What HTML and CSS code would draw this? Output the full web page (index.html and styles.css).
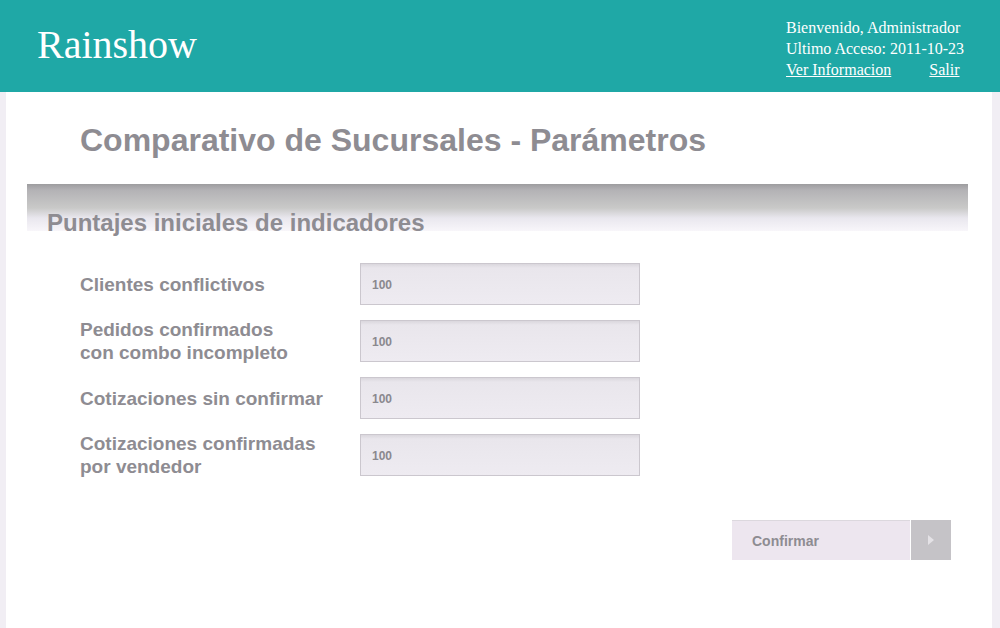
FILE: index.html
```html
<!DOCTYPE html>
<html lang="es">
<head>
<meta charset="utf-8">
<title>Rainshow - Comparativo de Sucursales</title>
<link rel="stylesheet" href="styles.css">
</head>
<body>
<header class="topbar">
  <div class="brand">Rainshow</div>
  <div class="userbox">
    <div>Bienvenido, Administrador</div>
    <div>Ultimo Acceso: 2011-10-23</div>
    <div class="links"><a href="#">Ver Informacion</a><a href="#">Salir</a></div>
  </div>
</header>
<main class="content">
  <h1 class="title">Comparativo de Sucursales - Parámetros</h1>
  <section class="section">
    <div class="section-bar"><h2>Puntajes iniciales de indicadores</h2></div>
    <form class="form">
      <label class="label" for="f1">Clientes conflictivos</label>
      <input class="field" id="f1" type="text" value="100">
      <label class="label" for="f2">Pedidos confirmados<br>con combo incompleto</label>
      <input class="field" id="f2" type="text" value="100">
      <label class="label" for="f3">Cotizaciones sin confirmar</label>
      <input class="field" id="f3" type="text" value="100">
      <label class="label" for="f4">Cotizaciones confirmadas<br>por vendedor</label>
      <input class="field" id="f4" type="text" value="100">
    </form>
    <div class="actions">
      <button class="btn" type="button"><span class="btn-text">Confirmar</span><span class="btn-arrow"><svg width="8" height="12" viewBox="0 0 8 12"><path d="M1 1 L7 6 L1 11 Z" fill="#e4e2e6"/></svg></span></button>
    </div>
  </section>
</main>
</body>
</html>
```
FILE: styles.css
```css
html, body {
  margin: 0;
  padding: 0;
  background: #ffffff;
}
body {
  width: 1000px;
  height: 628px;
  overflow: hidden;
  font-family: "Liberation Sans", Arial, sans-serif;
}
.topbar {
  height: 92px;
  background: #1fa8a6;
  display: flex;
  justify-content: space-between;
  color: #ffffff;
  font-family: "Liberation Serif", "Times New Roman", serif;
}
.brand {
  font-size: 40px;
  line-height: 46px;
  padding: 22px 0 0 37px;
}
.userbox {
  width: 214px;
  padding-top: 17px;
  font-size: 16px;
  line-height: 21px;
}
.links {
  display: flex;
  gap: 38px;
}
.links a {
  color: #ffffff;
  text-decoration: underline;
}
.content {
  height: 536px;
  border-left: 6px solid #f1eef4;
  border-right: 8px solid #f1eef4;
  background: #ffffff;
}
.title {
  margin: 0;
  padding: 30px 0 0 74px;
  height: 62px;
  font-size: 32px;
  line-height: 36px;
  font-weight: bold;
  color: #8e8c92;
}
.section-bar {
  margin: 0 24px 0 21px;
  height: 47px;
  background: linear-gradient(to bottom, #9d9d9f 0px, #b3b2b5 6px, #c9c9c8 24px, #e9e7ee 34px, #f8f6fa 47px);
}
.section-bar h2 {
  margin: 0;
  padding: 27px 0 0 20px;
  font-size: 24px;
  line-height: 24px;
  font-weight: bold;
  color: #8e8c92;
}
.form {
  display: grid;
  grid-template-columns: 280px 280px;
  grid-auto-rows: 42px;
  row-gap: 15px;
  align-items: center;
  padding: 32px 0 0 74px;
}
.label {
  font-size: 19px;
  line-height: 23px;
  font-weight: bold;
  color: #8e8c92;
}
.field {
  box-sizing: border-box;
  width: 280px;
  height: 42px;
  margin: 0;
  padding: 2px 11px 0;
  border: 1px solid #cbc7ce;
  background: linear-gradient(to bottom, #dad7dd 0px, #e9e6ec 4px, #eeebf1 100%);
  font-family: "Liberation Sans", Arial, sans-serif;
  font-size: 12px;
  font-weight: bold;
  color: #8a888e;
  outline: none;
}
.actions {
  display: flex;
  justify-content: flex-end;
  padding: 44px 41px 0 0;
}
.btn {
  display: flex;
  height: 40px;
  margin: 0;
  padding: 0;
  border: 0;
  background: none;
  font-family: "Liberation Sans", Arial, sans-serif;
  cursor: pointer;
}
.btn-text {
  width: 178px;
  box-sizing: border-box;
  padding-left: 20px;
  display: flex;
  align-items: center;
  background: #ede6ef;
  border-top: 1px solid #dcd8de;
  font-size: 14px;
  font-weight: bold;
  color: #8e8c92;
}
.btn-arrow {
  width: 40px;
  display: flex;
  align-items: center;
  justify-content: center;
  background: #c5c3c7;
  border-left: 1px solid #ffffff;
}
```
